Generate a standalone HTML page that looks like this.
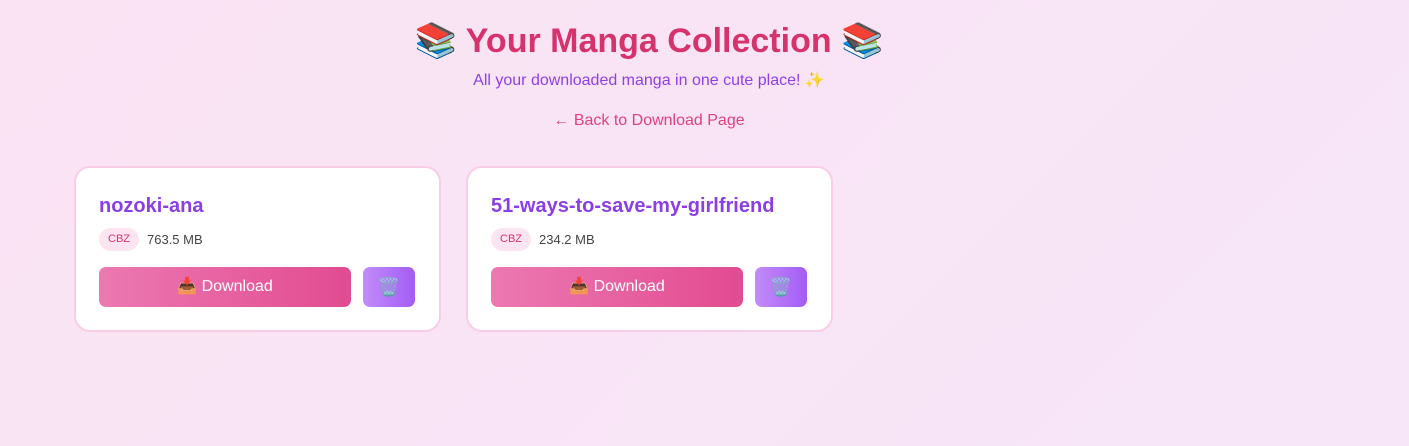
<!DOCTYPE html>
<html><head><meta charset="utf-8"><style>
*{box-sizing:border-box;margin:0;padding:0}
body{width:1409px;height:446px;overflow:hidden;background:linear-gradient(135deg,#fae3f3 0%,#f6e6f8 100%);font-family:"Liberation Sans","Noto Sans CJK JP",sans-serif;position:relative}
h1{position:absolute;top:20px;left:0;width:1298px;text-align:center;font-size:34px;font-weight:bold;color:#d6336c;line-height:42px}
.sub{position:absolute;top:71px;left:0;width:1298px;text-align:center;font-size:16px;color:#8e3fe6;line-height:20px}
.back{position:absolute;top:111px;left:0;width:1298px;text-align:center;font-size:16px;color:#e0407f;line-height:20px}
.card{position:absolute;top:166px;width:367px;height:166px;background:#fff;border:2px solid #f9cde6;border-radius:16px}
.t{position:absolute;left:23px;top:27px;font-size:20px;font-weight:bold;color:#8b3de6}
.badge{position:absolute;left:23px;top:60px;width:40px;height:23px;border-radius:12px;background:#fce4f1;color:#d6336c;font-size:11px;text-align:center;line-height:23px}
.size{position:absolute;left:71px;top:64px;font-size:13px;color:#444;}
.dl{position:absolute;left:23px;top:99px;width:252px;height:40px;border-radius:7px;background:linear-gradient(90deg,#ec79b1,#e24b91);color:#fff;font-size:16px;text-align:center;line-height:40px}
.tr{position:absolute;left:287px;top:99px;width:52px;height:40px;border-radius:7px;background:linear-gradient(90deg,#c38cf9,#a35cf5);text-align:center;line-height:40px;font-size:18px}
</style></head><body>
<h1>📚 Your Manga Collection 📚</h1>
<div class="sub">All your downloaded manga in one cute place! ✨</div>
<div class="back">← Back to Download Page</div>
<div class="card" style="left:74px"><div class="t">nozoki-ana</div><div class="badge">CBZ</div><div class="size">763.5 MB</div><div class="dl">📥 Download</div><div class="tr">🗑️</div></div>
<div class="card" style="left:466px"><div class="t">51-ways-to-save-my-girlfriend</div><div class="badge">CBZ</div><div class="size">234.2 MB</div><div class="dl">📥 Download</div><div class="tr">🗑️</div></div>
</body></html>
